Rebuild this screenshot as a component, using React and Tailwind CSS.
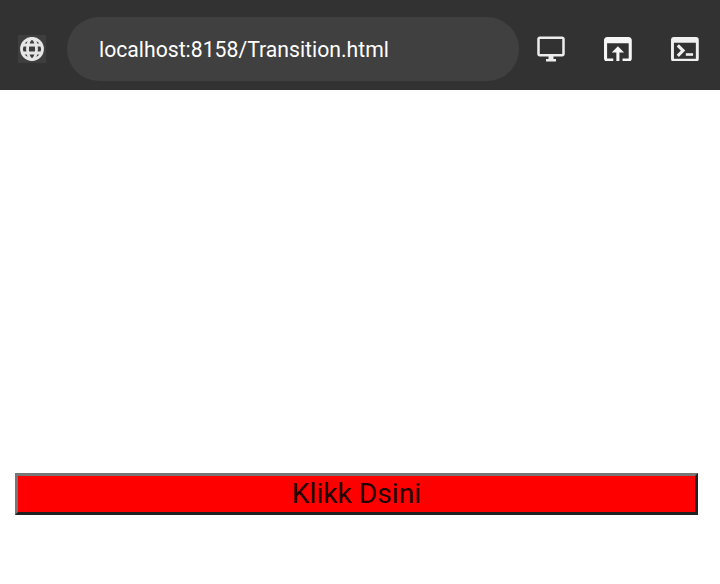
function Globe() {
  return (
    <svg viewBox="0 0 28 28" className="block size-7" fill="none" stroke="#e6e6e6" strokeWidth="2.8">
      <circle cx="14" cy="14" r="10.5" />
      <ellipse cx="14" cy="14" rx="4.5" ry="10.5" />
      <path d="M4 10h20M4 18h20" />
    </svg>
  );
}

function Desktop() {
  return (
    <svg viewBox="0 0 24 24" className="block size-[30px]" fill="#ededed">
      <path d="M21 2H3c-1.1 0-2 .9-2 2v12c0 1.1.9 2 2 2h7v2H8v2h8v-2h-2v-2h7c1.1 0 2-.9 2-2V4c0-1.1-.9-2-2-2zm0 14H3V4h18v12z" />
    </svg>
  );
}

function OpenInBrowser() {
  return (
    <svg viewBox="3 4 18 16" className="block h-[24.7px] w-[27.8px]" fill="#f6f6f6">
      <path d="M19 4H5c-1.11 0-2 .9-2 2v12c0 1.1.89 2 2 2h4v-2H5V8h14v10h-4v2h4c1.1 0 2-.9 2-2V6c0-1.1-.89-2-2-2zm-7 6l-4 4h3v6h2v-6h3l-4-4z" />
    </svg>
  );
}

function Terminal() {
  return (
    <svg viewBox="0 0 18 16" className="block h-[24.7px] w-[27.8px]" fill="#f0f0f0">
      <path fillRule="evenodd" d="M1.9 0h14.2A1.9 1.9 0 0 1 18 1.9v12.2a1.9 1.9 0 0 1-1.9 1.9H1.9A1.9 1.9 0 0 1 0 14.1V1.9A1.9 1.9 0 0 1 1.9 0zM1.9 3.8v10.3h14.2V3.8z" />
      <path d="M4.4 5.4 7.8 8.8 4.4 12.2" fill="none" stroke="#f0f0f0" strokeWidth="2" />
      <path d="M9.6 10.5h4.7v1.7H9.6z" />
    </svg>
  );
}

export default function App() {
  return (
    <div className="flex h-[584px] w-[720px] flex-col bg-white font-['Roboto',sans-serif]">
      <header className="flex h-[90px] shrink-0 items-center bg-[#323232] pt-2 pl-[18px]">
        <div className="size-7 shrink-0 bg-[#3e3e3e]">
          <Globe />
        </div>
        <div className="ml-[21px] flex h-16 w-[452px] shrink-0 items-center rounded-full bg-[#404040] pt-px pl-8 text-[21.2px] whitespace-nowrap text-white">
          localhost:8158/Transition.html
        </div>
        <div className="ml-[17px]">
          <Desktop />
        </div>
        <div className="ml-[38.2px]">
          <OpenInBrowser />
        </div>
        <div className="ml-[39.2px]">
          <Terminal />
        </div>
      </header>
      <main className="flex flex-1 flex-col justify-end pr-[22px] pb-[69px] pl-[15px]">
        <button className="h-[42px] w-full border-3 border-t-[#767676] border-r-[#212121] border-b-[#212121] border-l-[#767676] bg-[#ff0000] text-[28.2px] leading-9 text-[#210000]">
          Klikk Dsini
        </button>
      </main>
    </div>
  );
}
